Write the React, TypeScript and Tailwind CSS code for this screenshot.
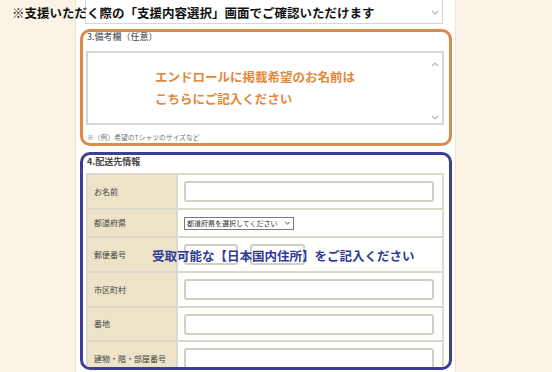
const jp = "font-['Noto_Sans_CJK_JP','Noto_Sans',sans-serif]";

function Chevron({ up = false, className = "" }: { up?: boolean; className?: string }) {
  return (
    <svg viewBox="0 0 8 5" className={className} fill="none" stroke="currentColor" strokeWidth="1.1">
      {up ? <polyline points="1,4 4,1 7,4" /> : <polyline points="1,1 4,4 7,1" />}
    </svg>
  );
}

function Input({ w = "w-[250px]" }: { w?: string }) {
  return <div className={`${w} h-[21px] rounded-[3px] border-2 border-[#d3cfc3] bg-white`} />;
}

const rows: { label: string; h: string; field: "input" | "select" | "zip" }[] = [
  { label: "お名前", h: "h-[33px]", field: "input" },
  { label: "都道府県", h: "h-[26px]", field: "select" },
  { label: "郵便番号", h: "h-[33px]", field: "zip" },
  { label: "市区町村", h: "h-[33px]", field: "input" },
  { label: "番地", h: "h-[32px]", field: "input" },
  { label: "建物・階・部屋番号", h: "h-[33px]", field: "input" },
];

export default function App() {
  return (
    <div className={`relative flex h-[372px] w-[552px] overflow-hidden bg-[#fbf4e6] ${jp}`}>
      <div className="w-[75px] shrink-0" />

      <div className="h-full w-[381px] shrink-0 border-x border-[#eee4cf] bg-white pl-[4px] pr-[3px]">
        {/* bottom of the previous field */}
        <div className="relative ml-[5px] h-[24px] w-[358px] border border-t-0 border-[#d6d6d6]">
          <Chevron className="absolute right-[3px] top-[10px] h-[5px] w-[8px] text-[#b5b5b5]" />
        </div>

        {/* 3. notes */}
        <div className="mt-[5px] h-[117px] overflow-hidden rounded-[10px] border-[3px] border-[#d98b4c]">
          <div className="ml-[4px] h-[10px] text-[9px] leading-[10px] text-[#444]">3.備考欄（任意）</div>
          <div className="relative ml-[3px] mt-[9px] h-[74px] w-[358px] border-2 border-[#d6d6d6] bg-white pl-[67px] pt-[13px]">
            <p className="text-[12.5px] font-bold leading-[22px] text-[#e0893a]">エンドロールに掲載希望のお名前は</p>
            <p className="text-[12.5px] font-bold leading-[22px] text-[#e0893a]">こちらにご記入ください</p>
            <Chevron up className="absolute right-[3px] top-[9px] h-[5px] w-[8px] text-[#b5b5b5]" />
            <Chevron className="absolute bottom-[3px] right-[3px] h-[5px] w-[8px] text-[#b5b5b5]" />
          </div>
          <div className="ml-[4px] mt-[8px] text-[6.8px] leading-[8px] text-[#777]">※（例）希望のTシャツのサイズなど</div>
        </div>

        {/* 4. delivery */}
        <div className="mt-[6px] h-[218px] overflow-hidden rounded-[10px] border-[3px] border-[#3d3f95]">
          <div className="ml-[4px] mt-[2px] h-[10px] text-[9px] font-bold leading-[10px] text-[#444]">4.配送先情報</div>
          <div className="ml-[3px] mt-[6px] w-[358px] border-2 border-b-0 border-[#dcd8cc]">
            {rows.map((r) => (
              <div key={r.label} className="flex border-b-2 border-[#dcd8cc]">
                <div className={`${r.h} flex w-[88px] items-center bg-[#ece3c8] pl-[6px] text-[8px] text-[#444]`}>
                  {r.label}
                </div>
                <div className={`${r.h} flex flex-1 items-center border-l-2 border-[#dcd8cc] bg-[#fffffd] pl-[6px]`}>
                  {r.field === "input" && <Input />}
                  {r.field === "select" && (
                    <div className="flex h-[13px] w-[110px] items-center justify-between overflow-hidden whitespace-nowrap border border-[#7a7a7a] bg-white px-[2px] text-[7px] leading-[11px] text-[#333]">
                      <span>都道府県を選択してください</span>
                      <Chevron className="h-[4px] w-[7px] shrink-0 text-[#333]" />
                    </div>
                  )}
                  {r.field === "zip" && (
                    <div className="flex gap-[12px]">
                      <Input w="w-[54px]" />
                      <Input w="w-[55px]" />
                    </div>
                  )}
                </div>
              </div>
            ))}
          </div>
        </div>
      </div>

      {/* overlay captions */}
      <p className="absolute left-[12px] top-[4px] text-[12.5px] font-bold leading-[18px] text-[#111]">
        ※支援いただく際の「支援内容選択」画面でご確認いただけます
      </p>
      <p className="absolute left-[152px] top-[247px] text-[12.5px] font-bold leading-[18px] text-[#2f3b95]">
        受取可能な【日本国内住所】をご記入ください
      </p>
    </div>
  );
}
